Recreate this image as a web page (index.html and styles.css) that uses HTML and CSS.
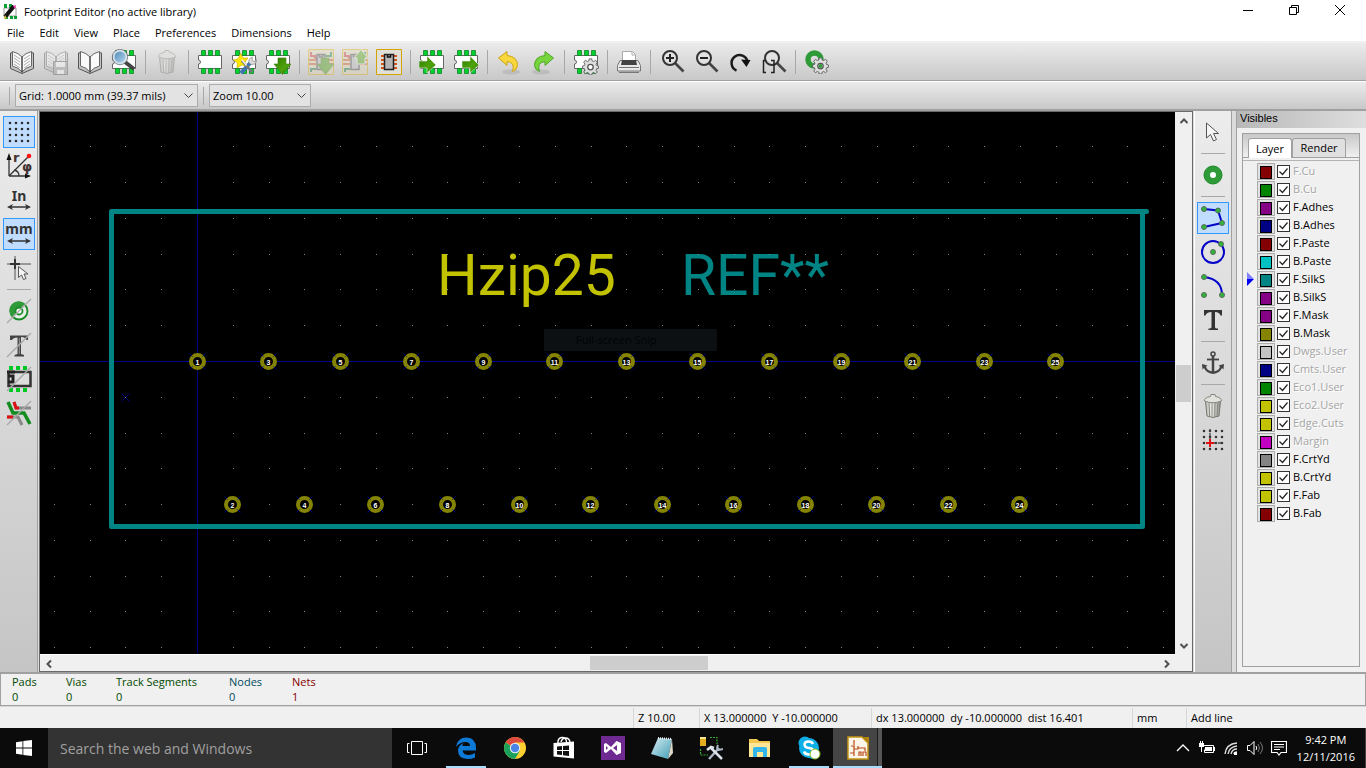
FILE: index.html
```html
<!DOCTYPE html>
<html lang="en">
<head>
<meta charset="utf-8">
<title>Footprint Editor</title>
<link rel="stylesheet" href="styles.css">
</head>
<body>
<svg class="defs" aria-hidden="true">
  <defs>
    <linearGradient id="down" x1="0" y1="0" x2="1" y2="1"><stop offset="0" stop-color="#2f7d00"/><stop offset=".6" stop-color="#4fa30c"/><stop offset="1" stop-color="#2e7400"/></linearGradient>
    <linearGradient id="glass" x1="0" y1="0" x2="1" y2="1"><stop offset="0" stop-color="#4b86b5"/><stop offset="1" stop-color="#b8dcf2"/></linearGradient>
    <linearGradient id="can" x1="0" y1="0" x2="1" y2="0"><stop offset="0" stop-color="#b4b6ae"/><stop offset=".4" stop-color="#f2f2ee"/><stop offset="1" stop-color="#8d8f88"/></linearGradient>
    <linearGradient id="note" x1="0" y1="0" x2="1" y2="1"><stop offset="0" stop-color="#d8eef4"/><stop offset="1" stop-color="#3f9cb4"/></linearGradient>
    <symbol id="chip" viewBox="0 0 26 26">
      <path d="M1.5 6.5h23v13h-23v-4.500a2 2 0 0 0 0-4z" fill="#fff" stroke="#666"/>
      <path d="M4.500 1.500h4v5h-4zM11.500 1.500h4v5h-4zM18.500 1.500h4v5h-4zM4.500 19.500h4v5h-4zM11.500 19.500h4v5h-4zM18.500 19.500h4v5h-4z" fill="#00d22d" stroke="#17802a" stroke-width=".8"/>
    </symbol>
    <symbol id="book" viewBox="0 0 26 26">
      <path d="M1.500 4v15.500l11.500 5 11.500-5V4l-2-.5L13 8 3.500 3.500z" fill="#c4c4c4" stroke="#555" stroke-linejoin="round"/>
      <path d="M3.500 2.500v14.500q6 1.500 9.500 6 3.500-4.500 9.500-6V2.500Q16.500 4 13 8 9.500 4 3.500 2.500z" fill="#fafafa" stroke="#666"/><path d="M13 8v15.500" stroke="#444" stroke-width="1.500"/>
    </symbol>
    <symbol id="booklines" viewBox="0 0 26 26"><path d="M5 6l6 4M5 9l6 4M5 12l6 4M5 15l6 4M21 6l-6 4M21 9l-6 4M21 12l-6 4M21 15l-6 4" stroke="#aaa" fill="none"/></symbol>
    <symbol id="trash" viewBox="0 0 26 26">
      <path d="M5.500 8l1.500 15q6 3 12 0L20.500 8z" fill="url(#can)" stroke="#777a70"/>
      <path d="M9 10l.7 13M12 10v14M15 10l-.3 14M18 10l-1 13" stroke="#85877f"/>
      <path d="M4.500 8q-.5-3.500 6-4.500l.5-2h4l.5 2q6 1 6 4.500-8.500 3.500-17 0z" fill="#e2e3dd" stroke="#85877f"/>
    </symbol>
    <symbol id="gear" viewBox="0 0 20 20">
      <path d="M8.500 1h3l.5 2.500 1.700.7L16 2.700 18 5l-1.500 2.200.7 1.700 2.300.6v2.500l-2.300.7-.7 1.700L18 16.500 16 18.500l-2.300-1.500-1.700.8-.5 2.200h-3L8 17.800l-1.700-.8L4 18.500 2 16.500l1.500-2.100-.7-1.700L.5 12V9.500l2.300-.6.7-1.700L2 5l2-2.300 2.300 1.500L8 3.500z" fill="#dedede" stroke="#555"/>
      <circle cx="10" cy="10.700" r="3.200" fill="#fff" stroke="#555" stroke-width="1.500"/>
    </symbol>
    <symbol id="pcb" viewBox="0 0 26 26">
      <path d="M.5.5h25v25H.5z" fill="#e2dab4" stroke="#e0ac00"/>
      <path d="M3 3v4h5M6 8l3 2" stroke="#c33" stroke-width="2" fill="none"/><path d="M23 3v4h-5M3 23v-3h5" stroke="#1c7a3c" stroke-width="2" fill="none"/>
      <path d="M1 11h7M1 15h7M18 11h7M18 15h7" stroke="#d4551a" stroke-width="2"/>
      <path d="M9 5.500h8v15H9zM11.500 6v2h3V6" fill="#bbb" stroke="#444" stroke-width="1.500"/>
    </symbol>
    <symbol id="darrow" viewBox="0 0 26 26"><path d="M13 9h8v6h5l-8.500 10.500L9 15h4z" fill="url(#down)" stroke="#3b7c08" stroke-width=".6"/></symbol>
    <symbol id="lens" viewBox="0 0 26 26"><path d="M15 14l8.500 8.500" stroke="#444" stroke-width="2.600"/><circle cx="10" cy="9" r="7" fill="#e5e5e5" fill-opacity=".5" stroke="#333" stroke-width="2"/></symbol>
    <symbol id="span" viewBox="0 0 26 26"><path d="M4 20h18" stroke="#333" stroke-width="1.500"/><path d="M1 20l6-3-1.500 3L7 23zM25 20l-6-3 1.500 3-1.500 3z" fill="#333"/></symbol>
    <symbol id="tools" viewBox="0 0 20 20"><path d="M3 18L14 6" stroke="#3e75b0" stroke-width="4"/><path d="M12 8q-2-5 3-7v4l3 1 1-3q2 5-4 6z" fill="#ddd" stroke="#777" stroke-width=".6"/><path d="M4 5l11 12" stroke="#777" stroke-width="2.500"/><path d="M4 4l5 6" stroke="#eee" stroke-width="1.500"/></symbol>
  </defs>
</svg>

<div class="app">
  <header class="titlebar">
    <svg class="app-icon" viewBox="0 0 16 16"><path d="M2 4h12v8H2z" fill="#fff" stroke="#999"/><path d="M2 0h3v4H2zM7 0h3v4H7zM3 12h3v3H3zM8 12h3v3H8zM12 12h3v3h-3z" fill="#0a9f32"/><path d="M3 13L12 2" stroke="#111" stroke-width="4"/><path d="M11 2l3-1-1 4z" fill="#e3a"/><path d="M3 11l2 3-3 1z" fill="#d4b72c"/></svg>
    <h1>Footprint Editor (no active library)</h1>
    <div class="window-buttons">
      <button aria-label="Minimize"><svg viewBox="0 0 12 12"><path d="M1 6.500h10" stroke="#000"/></svg></button>
      <button aria-label="Restore"><svg viewBox="0 0 12 12"><path d="M1.500 3.500h7v7h-7zM3.500 3V1.500h7v7H9" fill="none" stroke="#000"/></svg></button>
      <button aria-label="Close"><svg viewBox="0 0 12 12"><path d="M1 1l10 10M11 1L1 11" stroke="#000"/></svg></button>
    </div>
  </header>
  <nav class="menubar">
    <button>File</button><button>Edit</button><button>View</button><button>Place</button><button>Preferences</button><button>Dimensions</button><button>Help</button>
  </nav>

  <div class="toolbar">
    <button aria-label="Active library"><svg viewBox="0 0 26 26"><use href="#book"/><use href="#booklines"/></svg></button>
    <button aria-label="Save" disabled><svg viewBox="0 0 26 26"><use href="#book"/><use href="#booklines"/><path d="M10.500 12.500h14v13h-14z" fill="#999" stroke="#555"/><path d="M13 13h9v5h-9zM14 21h7v4h-7z" fill="#fff"/></svg></button>
    <button aria-label="New library"><svg viewBox="0 0 26 26"><use href="#book"/></svg></button>
    <button aria-label="Footprint viewer"><svg viewBox="0 0 26 26"><use href="#chip"/><path d="M14 13l9 7" stroke="#444" stroke-width="4"/><circle cx="9" cy="8" r="6.500" fill="url(#glass)" stroke="#d9e2ea" stroke-width="2"/><circle cx="9" cy="8" r="7.700" fill="none" stroke="#68727c" stroke-width=".8"/></svg></button>
    <span class="sep"></span>
    <button aria-label="Delete part" disabled><svg viewBox="0 0 26 26"><use href="#trash"/></svg></button>
    <span class="sep"></span>
    <button aria-label="New footprint"><svg viewBox="0 0 26 26"><use href="#chip"/></svg></button>
    <button aria-label="Footprint wizard"><svg viewBox="0 0 26 26"><use href="#chip"/><path d="M9.500 4l2.500 5h5l-3 4 2 5-5-2-5 3 .5-5-4-3 5-1.500z" fill="#ffe600" stroke="#c9a800" stroke-width=".6"/><use href="#tools" x="7" y="7" width="19" height="19"/></svg></button>
    <button aria-label="Load footprint"><svg viewBox="0 0 26 26"><use href="#chip"/><use href="#darrow"/></svg></button>
    <span class="sep"></span>
    <button aria-label="Load from board" disabled><svg viewBox="0 0 26 26"><use href="#pcb"/><use href="#darrow"/></svg></button>
    <button aria-label="Update in board" disabled><svg viewBox="0 0 26 26"><use href="#pcb"/><path d="M15 15V9h-3l7-8.500L26 9h-3v6z" fill="#4fa30c" stroke="#eee"/></svg></button>
    <button aria-label="Insert into board"><svg viewBox="0 0 26 26"><path d="M.5.500h25v25H.5z" fill="#e0dfd8" stroke="#d6a400"/><path d="M5 7h4M5 11h4M5 15h4M5 19h4M17 7h4M17 11h4M17 15h4M17 19h4" stroke="#d4551a" stroke-width="2"/><path d="M8.500 5.500h9v15h-9z" fill="#b5b5b5" stroke="#222" stroke-width="1.500"/><path d="M11.500 6v2h3V6" fill="none" stroke="#111" stroke-width="1.500"/></svg></button>
    <span class="sep"></span>
    <button aria-label="Import footprint"><svg viewBox="0 0 26 26"><use href="#chip"/><path d="M0 12h8V7l9 9-9 8v-5H0z" fill="url(#down)" stroke="#eee" stroke-width=".6"/></svg></button>
    <button aria-label="Export footprint"><svg viewBox="0 0 26 26"><use href="#chip"/><path d="M9 12h8V7l9 9-9 8v-5H9z" fill="url(#down)" stroke="#eee" stroke-width=".6"/></svg></button>
    <span class="sep"></span>
    <button aria-label="Undo"><svg viewBox="0 0 26 26"><ellipse cx="15" cy="23" rx="9" ry="2.500" fill="#aaa" opacity=".5"/><path d="M2.500 9L11 2.500v4q10.500 1 10.500 10-.5 4.500-5 6 3-9-5.500-10v4z" fill="#f7d73c" stroke="#d0a516"/></svg></button>
    <button aria-label="Redo"><svg viewBox="0 0 26 26"><ellipse cx="11" cy="23" rx="9" ry="2.500" fill="#aaa" opacity=".5"/><path d="M23.500 9L15 2.500v4q-10.500 1-10.500 10 .5 4.500 5 6-3-9 5.500-10v4z" fill="#76d43c" stroke="#4ea627"/></svg></button>
    <span class="sep"></span>
    <button aria-label="Footprint properties"><svg viewBox="0 0 26 26"><use href="#chip"/><use href="#gear" x="9" y="9" width="17" height="17"/></svg></button>
    <span class="sep"></span>
    <button aria-label="Print"><svg viewBox="0 0 26 26"><path d="M6.500 13V2.500h10l3 3V13z" fill="#fff" stroke="#aaa"/><path d="M16 3v3h3" fill="none" stroke="#aaa"/><path d="M4 11.500h18l2.500 5v5.500h-23v-5.500z" fill="#e8e8e8" stroke="#777"/><path d="M6 11h14l1 5H5z" fill="#444"/><path d="M3 18.500h20M3 23.500h20" stroke="#777"/></svg></button>
    <span class="sep"></span>
    <button aria-label="Zoom in"><svg viewBox="0 0 26 26"><use href="#lens" x="1"/><path d="M7 9h8M11 5v8" stroke="#222" stroke-width="2"/></svg></button>
    <button aria-label="Zoom out"><svg viewBox="0 0 26 26"><use href="#lens" x="1"/><path d="M7 9h8" stroke="#222" stroke-width="2"/></svg></button>
    <button aria-label="Redraw view"><svg viewBox="0 0 26 26"><path d="M9.500 21.500a8 8 0 1 1 11-8.500" fill="none" stroke="#1a1a1a" stroke-width="2.500"/><path d="M14 10.500l9.500.5-4 7z" fill="#111"/></svg></button>
    <button aria-label="Zoom to fit"><svg viewBox="0 0 26 26"><use href="#lens" x="1"/><path d="M5 11.500H2.500v12H5M10 11.500h3v12h-3" fill="none" stroke="#222" stroke-width="1.500"/></svg></button>
    <span class="sep"></span>
    <button aria-label="Pad settings"><svg viewBox="0 0 26 26"><circle cx="10.500" cy="10.500" r="6.500" fill="none" stroke="#2f9a38" stroke-width="5.500"/><use href="#gear" x="8" y="8" width="17" height="17"/><circle cx="16.500" cy="17" r="2" fill="#2f9a38"/></svg></button>
  </div>

  <div class="toolbar options">
    <span class="grip"></span>
    <select class="grid-select" aria-label="Grid"><option>Grid: 1.0000 mm (39.37 mils)</option></select>
    <span class="grip"></span>
    <select class="zoom-select" aria-label="Zoom"><option>Zoom 10.00</option></select>
  </div>

  <main class="workspace">
    <div class="tools">
      <button class="on" aria-label="Show grid"><svg viewBox="0 0 26 26"><path d="M4 4h19M4 10h19M4 16h19M4 22h19" stroke="#2b2b2b" stroke-width="2.600" stroke-linecap="round" stroke-dasharray="0 6"/></svg></button>
      <button aria-label="Polar coordinates"><svg viewBox="0 0 26 26"><path d="M3 23V4M3 23h19M3 23L23 3M8 17q5 1 5 6" fill="none" stroke="#333" stroke-width="1.300"/><path d="M3 0l2.500 7H.5zM25 23l-6-2.500v5z" fill="#111"/><circle cx="23" cy="3" r="2.300" fill="#f11"/><text x="7" y="9" class="icon-text">r</text><text x="16" y="18" class="icon-text">φ</text></svg></button>
      <button aria-label="Units in inches"><svg viewBox="0 0 26 26"><text x="13" y="14" text-anchor="middle" class="unit-text">In</text><use href="#span"/></svg></button>
      <button class="on" aria-label="Units in millimeters"><svg viewBox="0 0 26 26"><text x="13" y="13" text-anchor="middle" class="unit-text">mm</text><use href="#span"/></svg></button>
      <button aria-label="Cursor shape"><svg viewBox="0 0 26 26"><path d="M1 9h24M9 1v24" stroke="#999" stroke-width="2"/><path d="M4 9h10M9 4v10" stroke="#333" stroke-width="2"/><path d="M12.500 11.500v11l3-2.500 2 4.500 2.500-1-2-4.500h4z" fill="#f4f4f4" stroke="#555"/></svg></button>
      <span class="sep"></span>
      <button aria-label="Show pads sketch"><svg viewBox="0 0 26 26"><circle cx="13" cy="13" r="8.500" fill="#e8efe8" stroke="#178a25" stroke-width="1.800"/><path d="M6 19A9 9 0 0 1 19 6z" fill="#2f9a38"/><circle cx="13" cy="13" r="3.500" fill="#fff" stroke="#178a25" stroke-width="1.800"/><path d="M1 25L25 1" stroke="#aaa" stroke-width="1.300"/></svg></button>
      <button aria-label="Show texts sketch"><svg viewBox="0 0 26 26"><path d="M4 3.500h18V8h-1.500q-1-3-5.500-3v17l3 1v1.500H8.500V23l3-1V5.500Q7 5.500 6 8H4z" fill="#444"/><path d="M13.300 6v16" stroke="#999"/><path d="M1 25L25 1" stroke="#aaa" stroke-width="1.500"/></svg></button>
      <button aria-label="Show outlines sketch"><svg viewBox="0 0 26 26"><path d="M2.500 6v14h22V6z" fill="#ddd" stroke="#333" stroke-width="2.500"/><path d="M1 6h8M2 10h5v6H2" fill="none" stroke="#222" stroke-width="3"/><path d="M3 0h4v4H3zM10 0h4v4h-4zM17 0h4v4h-4zM3 22h4v4H3zM10 22h4v4h-4zM17 22h4v4h-4z" fill="#00c822"/><path d="M1 25L25 1" stroke="#aaa" stroke-width="1.500"/></svg></button>
      <button aria-label="High contrast mode"><svg viewBox="0 0 26 26"><path d="M8 2l2 6h15M1 17h11l4 8" fill="none" stroke="#888" stroke-width="3"/><path d="M8 2l2 6h3M1 17h6" fill="none" stroke="#d11" stroke-width="3"/><path d="M2 2l5 11h11l6 11" fill="none" stroke="#128c1e" stroke-width="3.500"/><path d="M1 25L25 1" stroke="#aaa" stroke-width="1.500"/></svg></button>
    </div>

    <section class="canvas-frame">
      <svg class="canvas" role="img" aria-label="Footprint Hzip25">
        <g transform="translate(157.5 249.5)">
          <path d="M-400 0H3000M0-400V3000" class="axis"/>
          <path d="M-86-150H949M945-150V165H-86V-150" class="silk"/>
          <path d="M-76 32l8 8M-68 32l-8 8" class="axis"/>
          <g id="pads"></g>
        </g>
        <text x="397" y="183" class="value">Hzip25</text>
        <text x="641" y="183" class="reference">REF**</text>
        <g transform="translate(157 249)"><path id="dots" class="dots"/></g>
        <rect x="504" y="217" width="173" height="22" class="ghost"/>
        <text x="536" y="232" class="ghost-text">Full-screen Snip</text>
      </svg>
      <div class="vscroll">
        <button aria-label="Scroll up"><svg viewBox="0 0 10 10"><path d="M1.500 7L5 3.500 8.500 7"/></svg></button>
        <div class="track"><i></i></div>
        <button aria-label="Scroll down"><svg viewBox="0 0 10 10"><path d="M1.500 3L5 6.500 8.500 3"/></svg></button>
      </div>
      <div class="hscroll">
        <button aria-label="Scroll left"><svg viewBox="0 0 10 10"><path d="M7 1.500L3.500 5 7 8.500"/></svg></button>
        <div class="track"><i></i></div>
        <button aria-label="Scroll right"><svg viewBox="0 0 10 10"><path d="M3 1.500L6.500 5 3 8.500"/></svg></button>
      </div>
    </section>

    <div class="tools right">
      <button aria-label="Select"><svg viewBox="0 0 26 26"><path d="M6.500 4v15l4-3.500 3 6.500 3-1.500-3-6h5z" fill="#f6f6f6" stroke="#555"/></svg></button>
      <span class="sep"></span>
      <button aria-label="Add pads"><svg viewBox="0 0 26 26"><circle cx="13" cy="13" r="6" fill="#fff" stroke="#2f9a38" stroke-width="6"/><circle cx="13" cy="13" r="9" fill="none" stroke="#178a25"/></svg></button>
      <span class="sep"></span>
      <button class="on" aria-label="Add line"><svg viewBox="0 0 26 26"><path d="M4 4l14 1.500L22 18 4 22" fill="none" stroke="#0404c8" stroke-width="2"/><g class="nodes"><circle cx="4" cy="4" r="2.500"/><circle cx="18" cy="5.500" r="2.500"/><circle cx="22" cy="18" r="2.500"/><circle cx="4" cy="22" r="2.500"/></g></svg></button>
      <button aria-label="Add circle"><svg viewBox="0 0 26 26"><circle cx="13" cy="13" r="11" fill="none" stroke="#0404c8" stroke-width="2"/><g class="nodes"><circle cx="13" cy="13" r="2.500"/><circle cx="21" cy="5" r="2.500"/></g></svg></button>
      <button aria-label="Add arc"><svg viewBox="0 0 26 26"><path d="M4 4q18 2 18 18" fill="none" stroke="#0404c8" stroke-width="2"/><g class="nodes"><circle cx="4" cy="4" r="2.500"/><circle cx="22" cy="22" r="2.500"/><circle cx="4" cy="22" r="2.500"/></g></svg></button>
      <button aria-label="Add text"><svg viewBox="0 0 26 26"><path d="M4 3h18v5.500h-1.500q-1-3.500-5.500-3.500V20q0 1.500 3 1.500V23h-9.500v-1.500q3 0 3-1.500V5q-5 0-6 3.500H4z" fill="#333"/></svg></button>
      <span class="sep"></span>
      <button aria-label="Set anchor"><svg viewBox="0 0 26 26"><circle cx="13" cy="4" r="2" fill="none" stroke="#444" stroke-width="1.500"/><path d="M13 6v17" stroke="#444" stroke-width="2.500"/><path d="M7 9.500h12" stroke="#444" stroke-width="1.800"/><path d="M2 14l5.500 1.500-1.500 1q1 4.500 7 5 6-.5 7-5l-1.500-1L24 14l-.5 5.500-1.500-1.500q-2 5-9 6-7-1-9-6l-1.500 1.500z" fill="#444"/></svg></button>
      <span class="sep"></span>
      <button aria-label="Delete items"><svg viewBox="0 0 26 26"><use href="#trash"/></svg></button>
      <button aria-label="Grid origin"><svg viewBox="0 0 26 26"><path d="M4 4h19M4 10h19M4 16h19M4 22h19" stroke="#333" stroke-width="2.600" stroke-linecap="round" stroke-dasharray="0 6"/><path d="M10 2v10M10 16h13" stroke="#444" stroke-width="1.300" stroke-dasharray="3 1"/><path d="M6 16h8M10 12v8" stroke="#e01010" stroke-width="2"/></svg></button>
    </div>

    <aside class="visibles">
      <h2>Visibles</h2>
      <div class="book">
        <div class="tabs"><button class="active">Layer</button><button>Render</button></div>
        <ul class="layers">
          <li class="off"><button class="c-red" aria-label="F.Cu color"></button><label><input type="checkbox" checked>F.Cu</label></li>
          <li class="off"><button class="c-green" aria-label="B.Cu color"></button><label><input type="checkbox" checked>B.Cu</label></li>
          <li><button class="c-purple" aria-label="F.Adhes color"></button><label><input type="checkbox" checked>F.Adhes</label></li>
          <li><button class="c-navy" aria-label="B.Adhes color"></button><label><input type="checkbox" checked>B.Adhes</label></li>
          <li><button class="c-red" aria-label="F.Paste color"></button><label><input type="checkbox" checked>F.Paste</label></li>
          <li><button class="c-cyan" aria-label="B.Paste color"></button><label><input type="checkbox" checked>B.Paste</label></li>
          <li class="current"><button class="c-teal" aria-label="F.SilkS color"></button><label><input type="checkbox" checked>F.SilkS</label></li>
          <li><button class="c-purple" aria-label="B.SilkS color"></button><label><input type="checkbox" checked>B.SilkS</label></li>
          <li><button class="c-purple" aria-label="F.Mask color"></button><label><input type="checkbox" checked>F.Mask</label></li>
          <li><button class="c-olive" aria-label="B.Mask color"></button><label><input type="checkbox" checked>B.Mask</label></li>
          <li class="off"><button class="c-silver" aria-label="Dwgs.User color"></button><label><input type="checkbox" checked>Dwgs.User</label></li>
          <li class="off"><button class="c-navy" aria-label="Cmts.User color"></button><label><input type="checkbox" checked>Cmts.User</label></li>
          <li class="off"><button class="c-green" aria-label="Eco1.User color"></button><label><input type="checkbox" checked>Eco1.User</label></li>
          <li class="off"><button class="c-yellow" aria-label="Eco2.User color"></button><label><input type="checkbox" checked>Eco2.User</label></li>
          <li class="off"><button class="c-yellow" aria-label="Edge.Cuts color"></button><label><input type="checkbox" checked>Edge.Cuts</label></li>
          <li class="off"><button class="c-magenta" aria-label="Margin color"></button><label><input type="checkbox" checked>Margin</label></li>
          <li><button class="c-gray" aria-label="F.CrtYd color"></button><label><input type="checkbox" checked>F.CrtYd</label></li>
          <li><button class="c-yellow" aria-label="B.CrtYd color"></button><label><input type="checkbox" checked>B.CrtYd</label></li>
          <li><button class="c-yellow" aria-label="F.Fab color"></button><label><input type="checkbox" checked>F.Fab</label></li>
          <li><button class="c-red" aria-label="B.Fab color"></button><label><input type="checkbox" checked>B.Fab</label></li>
        </ul>
      </div>
    </aside>
  </main>

  <dl class="counts">
    <div class="copper"><dt>Pads</dt><dd>0</dd></div>
    <div class="copper"><dt>Vias</dt><dd>0</dd></div>
    <div class="copper"><dt>Track Segments</dt><dd>0</dd></div>
    <div class="nodes-count"><dt>Nodes</dt><dd>0</dd></div>
    <div class="nets"><dt>Nets</dt><dd>1</dd></div>
  </dl>
  <footer class="status">
    <span class="s-msg"></span><span class="s-zoom">Z 10.00</span><span class="s-pos">X 13.000000&nbsp; Y -10.000000</span><span class="s-delta">dx 13.000000&nbsp; dy -10.000000&nbsp; dist 16.401</span><span class="s-unit">mm</span><span class="s-tool">Add line</span>
  </footer>
</div>

<div class="taskbar">
  <button class="start" aria-label="Start"><svg viewBox="0 0 16 16"><path d="M0 2.200L6.500 1.200v6.300H0zM7.300 1.100L16 0v7.500H7.300zM0 8.400h6.500v6.400L0 13.800zM7.300 8.400H16V16l-8.700-1.100z" fill="#fff"/></svg></button>
  <input class="search" type="text" placeholder="Search the web and Windows" aria-label="Search the web and Windows">
  <button class="task" aria-label="Task view"><svg viewBox="0 0 24 24"><path d="M6.500 5.500h11v13h-11zM4.500 7.500h-2v9h2M19.500 7.500h2v9h-2" fill="none" stroke="#fff"/></svg></button>
  <button class="task open" aria-label="Edge"><svg viewBox="0 0 24 24"><path d="M2 11Q3.500 1.500 12.500 1.500 22 2 22 12v2.500H8.500q1 4.500 6 4.500 3.500 0 6.500-2v4.500Q18 23 13.500 23 4 22.500 4 14.500 4 9.500 9.500 7 8 9 8.500 10h7.500q0-4-4.500-4Q6 6 2 11z" fill="#0e7ad8"/></svg></button>
  <button class="task" aria-label="Chrome"><svg viewBox="0 0 24 24"><circle cx="12" cy="12" r="11" fill="#fcd030"/><path d="M12 12L2.500 6.500A11 11 0 0 1 21.500 6.500H12z" fill="#dd4b3e"/><path d="M2.500 6.500A11 11 0 0 0 12 23l5-8.500-5-2z" fill="#1aa05a"/><circle cx="12" cy="12" r="5.200" fill="#f2f2f2"/><circle cx="12" cy="12" r="4.200" fill="#4a86e8"/></svg></button>
  <button class="task" aria-label="Store"><svg viewBox="0 0 24 24"><path d="M1.500 7L22 5.500v17L1.500 20.500z" fill="#fff"/><path d="M6 8V5q1-4 5-3.500 3.500.5 3.500 5M9 6q1-4 5-4 4 .5 4 5" fill="none" stroke="#fff" stroke-width="1.400"/><path d="M5 10.500l5-.5v4H5zM11 10l6-.5V14h-6zM5 15h5v4l-5-.5zM11 15h6v5l-6-.7z" fill="#111"/></svg></button>
  <button class="task" aria-label="Visual Studio"><svg viewBox="0 0 24 24"><path d="M0 0h24v24H0z" fill="#6f2a91"/><path d="M3 8l2-1 5 4 5.500-6L20 7v10l-4.500 2-5.500-6-5 4-2-1zM5 10v4l2-2zM16 9l-4 3 4 3z" fill="#fff" fill-rule="evenodd"/></svg></button>
  <button class="task" aria-label="Notepad"><svg viewBox="0 0 24 24"><path d="M8 2l14 1-4 20L1 18z" fill="url(#note)"/><path d="M22 3l1 14-5 6z" fill="#ddd8c6"/><path d="M8 2l14 1" stroke="#eee" stroke-width="2" stroke-dasharray="1 1"/></svg></button>
  <button class="task" aria-label="Device tools"><svg viewBox="0 0 24 24"><path d="M1 1h6v9H1z" fill="#e3ac1f"/><path d="M1 2h6" stroke="#ffe58b" stroke-width="2"/><path d="M11 1.500h7V8M1.500 13v6H9" fill="none" stroke="#37a637" stroke-width="1.200" stroke-dasharray="2 1"/><path d="M10 23l10-11" stroke="#abb7c5" stroke-width="2.500"/><path d="M19 9q-2 4 1 5l4-1" fill="none" stroke="#abb7c5" stroke-width="2"/><path d="M8 14l4-3 3 1M12 12l11 11" fill="none" stroke="#dbe1e8" stroke-width="2.500"/></svg></button>
  <button class="task" aria-label="File Explorer"><svg viewBox="0 0 24 24"><path d="M1 3h8l2 2h11v16H1z" fill="#f3c64f"/><path d="M1 7h21v14H1z" fill="#ffe797"/><path d="M5 21v-8q0-2 2-2h10q2 0 2 2v8h-4v-5H9v5z" fill="#32b5e8"/></svg></button>
  <button class="task open" aria-label="Skype"><svg viewBox="0 0 24 24"><circle cx="8" cy="7" r="6.500" fill="#0eaee8"/><circle cx="12" cy="12" r="10" fill="#0eaee8"/><circle cx="16" cy="17" r="6" fill="#0eaee8"/><path d="M16 8q-1-2.500-4.500-2.500-4 0-4 3T12 12t4.500 3.500-4.500 3q-4 0-5-3" fill="none" stroke="#fff" stroke-width="2.500"/><circle cx="18" cy="18" r="5" fill="#fff" stroke="#89b916"/></svg></button>
  <button class="task open focus" aria-label="KiCad"><svg viewBox="0 0 24 24"><path d="M2 1h14l6 6v16H2z" fill="#fbf6e8" stroke="#c49412" stroke-width="1.500"/><path d="M17 1h6v6z" fill="#b28508"/><path d="M8 4v5M5 10h4M8 10v10M4 17h4M8 13h4v-3M12 12h7v3M13 20v-4h2v4M17 20v-4h3v4" fill="none" stroke="#bd4a1b" stroke-width="1.200"/></svg></button>
  <div class="tray">
    <button aria-label="Show hidden icons"><svg viewBox="0 0 16 16"><path d="M2 11l6-6 6 6" fill="none" stroke="#fff" stroke-width="1.300"/></svg></button>
    <button aria-label="Battery"><svg viewBox="0 0 16 16"><path d="M3.500 5.500h11v7h-9v-3" fill="none" stroke="#fff"/><path d="M6 7h7v4H6zM15 7h1v4h-1zM0 3h5v4H0zM1 1h1v2H1zM3 1h1v2H3zM2 7h1v5H2z" fill="#fff"/></svg></button>
    <button aria-label="Wi-Fi"><svg viewBox="0 0 16 16"><path d="M2 14Q3 4 14 3M5 14Q6 7 14 6M8 14q1-5 6-5M11 14q0-2 3-2" fill="none" stroke="#ddd" stroke-width="1.400"/><path d="M11 12h3v3h-3z" fill="#fff"/></svg></button>
    <button aria-label="Volume"><svg viewBox="0 0 16 16"><path d="M.5 5.500H3l4-4v13l-4-4H.5zM9 6q1.500 2 0 4" fill="none" stroke="#fff"/><path d="M11 4q3 4 0 8M13 2q5 6 0 12" fill="none" stroke="#777"/></svg></button>
    <button aria-label="Notifications"><svg viewBox="0 0 16 16"><path d="M.5 1.500h15v11H10L8 15l-2-2.500H.5zM3 4.500h10M3 7h10M3 9.500h6" fill="none" stroke="#fff" stroke-width="1.200"/></svg></button>
    <time>9:42 PM<br>12/11/2016</time>
  </div>
</div>
<script src="app.js"></script>
</body>
</html>
```
FILE: styles.css
```css
* { box-sizing: border-box; }
body {
  margin: 0;
  height: 100vh;
  display: flex;
  flex-direction: column;
  background: #f0f0f0;
  color: #000;
  font: 11px/16px "Open Sans", "Noto Sans", sans-serif;
  overflow: hidden;
}
button { border: 0; padding: 0; background: none; font: inherit; color: inherit; }
h1, h2, ul, dl, dd { margin: 0; padding: 0; font: inherit; list-style: none; }
.defs { position: absolute; width: 0; height: 0; }
.app { flex: 1; min-height: 0; display: flex; flex-direction: column; }

.titlebar { display: flex; align-items: center; height: 23px; padding: 0 3px 0 2px; gap: 6px; background: #fff; }
.titlebar h1 { flex: 1; }
.app-icon { width: 16px; height: 16px; }
.window-buttons { display: flex; align-self: flex-start; }
.window-buttons button { width: 46px; height: 20px; display: grid; place-items: center; }
.window-buttons svg { width: 12px; height: 12px; }
.menubar { display: flex; gap: 15px; height: 20px; padding: 2px 7px 0; background: #fff; border-bottom: 2px solid #f0f0f0; }

.toolbar {
  display: flex;
  align-items: center;
  height: 38px;
  padding-left: 5px;
  background: linear-gradient(#ebebeb, #c8c8c8);
  border-bottom: 1px solid #a0a0a0;
}
.toolbar button { width: 34px; height: 34px; display: grid; place-items: center; }
.toolbar svg { width: 26px; height: 26px; }
button:disabled svg { opacity: .4; }
.toolbar .sep { width: 1px; height: 24px; margin: 0 4px; background: #a8a8a8; }
.toolbar.options { height: 30px; border-top: 1px solid #fff; border-bottom: 2px solid #a0a0a0; }
.grip { width: 1px; height: 18px; margin: 0 5px 0 4px; background: #a8a8a8; }
select {
  appearance: none;
  height: 23px;
  border: 1px solid #acacac;
  border-radius: 0;
  padding: 0 3px;
  font: inherit;
  color: #000;
  background: #e3e3e3 url("data:image/svg+xml,%3Csvg xmlns='http://www.w3.org/2000/svg' width='9' height='6'%3E%3Cpath d='M.5.5l4 4 4-4' fill='none' stroke='%23444'/%3E%3C/svg%3E") no-repeat right 4px center;
}
.grid-select { width: 183px; margin-right: 1px; }
.zoom-select { width: 102px; }

.workspace { flex: 1; min-height: 0; display: flex; background: #dcdcdc; }
.tools {
  width: 38px;
  padding: 4px 1px 0 2px;
  display: flex;
  flex-direction: column;
  align-items: center;
  background: linear-gradient(#ececec, #c5c5c5);
  border-right: 1px solid #a0a0a0;
}
.tools button { width: 32px; height: 32px; margin: 1px 0; display: grid; place-items: center; border: 1px solid transparent; }
.tools button.on { background: #c0dcff; border-color: #3399ff; }
.tools svg { width: 26px; height: 26px; overflow: visible; }
.tools .sep { width: 24px; height: 1px; margin: 4px 0; background: #a8a8a8; }
.tools.right { margin-left: 1px; padding: 4px 2px 0 1px; border-left: 1px solid #fff; }
.icon-text { font: bold 13px "DejaVu Sans", sans-serif; fill: #433; }
.unit-text { font: bold 14px "Noto Sans", sans-serif; fill: #333; }
.nodes circle { fill: #2fb53c; stroke: #5c6b5e; }

.canvas-frame {
  flex: 1;
  min-width: 0;
  margin-left: 1px;
  display: grid;
  grid-template: minmax(0, 1fr) 17px / minmax(0, 1fr) 17px;
  background: #f0f0f0;
  border: 1px solid #696969;
}
.canvas { width: 100%; height: 100%; background: #000; overflow: hidden; }
.axis { stroke: #000084; fill: none; }
.silk { stroke: #008484; stroke-width: 5; stroke-linecap: round; stroke-linejoin: round; fill: none; }
.value, .reference { font: 57px Roboto, sans-serif; }
.value { fill: #c2c200; }
.reference { fill: #008484; }
.pad circle { fill: #000; stroke: #848400; stroke-width: 4; }
.pad text { font: bold 7px "Liberation Sans", sans-serif; fill: #fff; text-anchor: middle; }
.dots { fill: #848484; }
.ghost { fill: #0c1013; }
.ghost-text { font-size: 11px; fill: #020304; }
.vscroll, .hscroll { display: flex; }
.vscroll { flex-direction: column; }
.hscroll button, .vscroll button { width: 17px; height: 17px; display: grid; place-items: center; }
.hscroll svg, .vscroll svg { width: 10px; height: 10px; fill: none; stroke: #505050; stroke-width: 2; }
.hscroll .track, .vscroll .track { flex: 1; display: flex; padding: 1px; }
.hscroll { border-top: 1px solid #fff; }
.track i { background: #cdcdcd; }
.hscroll .track { padding-left: 47%; }
.hscroll .track i { width: 118px; }
.vscroll .track { flex-direction: column; justify-content: center; }
.vscroll .track i { height: 37px; }

.visibles { width: 130px; margin-left: 4px; display: flex; flex-direction: column; background: #f0f0f0; border-left: 1px solid #a0a0a0; }
.visibles h2 { height: 17px; padding-left: 3px; background: linear-gradient(90deg, #b8b8b8, #dedede); font: 11px/14px "Liberation Sans", sans-serif; }
.book { flex: 1; margin: 5px 6px 5px 5px; border: 1px solid #a0a0a0; }
.tabs { height: 24px; display: flex; align-items: flex-end; padding: 0 5px; background: linear-gradient(#c8c8c8, #f0f0f0); border-bottom: 1px solid #a0a0a0; box-shadow: 0 2px 0 #f0f0f0, 0 3px 0 #b4b4b4; }
.tabs button { height: 19px; width: 54px; border: 1px solid #a0a0a0; border-bottom: 0; border-radius: 3px 3px 0 0; background: #e0e0e0; }
.tabs button.active { width: 44px; height: 20px; margin-bottom: -1px; background: #fff; }
.layers { padding: 4px 0 0 14px; }
.layers li { height: 18px; display: flex; align-items: center; gap: 2px; position: relative; }
.layers button { width: 18px; height: 17px; border: 1px solid #acacac; padding: 2px; background: #e1e1e1; display: flex; }
.layers button::before { content: ""; width: 12px; height: 11px; border: 1px solid #000; background: currentColor; }
.layers label { display: flex; align-items: center; gap: 3px; line-height: 18px; }
.layers input {
  appearance: none;
  width: 13px;
  height: 13px;
  margin: 0;
  border: 1px solid #333;
  background: #fff;
}
.layers input:checked {
  background: #fff url("data:image/svg+xml,%3Csvg xmlns='http://www.w3.org/2000/svg' width='11' height='11'%3E%3Cpath d='M1.500 5.500l3 3 5-6' fill='none' stroke='%23222' stroke-width='1.200'/%3E%3C/svg%3E") center;
}
.layers .off label { color: #a5a5a5; text-shadow: 1px 1px #fff; }
.layers .current::before {
  content: "";
  position: absolute;
  left: -10px;
  top: 2px;
  width: 7px;
  height: 14px;
  background: linear-gradient(#8080ff 50%, #0000f0 50%);
  clip-path: polygon(0 0, 100% 50%, 0 100%);
}
.layers .c-red { color: #840000; }
.layers .c-green { color: #008400; }
.layers .c-purple { color: #840084; }
.layers .c-navy { color: #000084; }
.layers .c-cyan { color: #00c2c2; }
.layers .c-teal { color: #008484; }
.layers .c-olive { color: #848400; }
.layers .c-silver { color: #c2c2c2; }
.layers .c-yellow { color: #c2c200; }
.layers .c-magenta { color: #c200c2; }
.layers .c-gray { color: #848484; }
.layers button::before { border-color: #000; }

.counts { height: 34px; display: flex; padding: 0 11px; line-height: 15px; border: 1px solid #a0a0a0; border-top-width: 2px; }
.counts > div { min-width: 50px; margin-right: 4px; }
.counts > div:nth-child(2) { min-width: 46px; }
.counts > div:nth-child(3) { min-width: 109px; }
.counts > div:nth-child(4) { min-width: 59px; }
.copper { color: #004800; }
.nodes-count { color: #004b60; }
.nets { color: #840000; }
.status { height: 22px; display: flex; padding-top: 1px; line-height: 20px; border-top: 1px solid #d7d7d7; }
.status span + span { padding-left: 4px; border-left: 1px solid #d7d7d7; white-space: nowrap; }
.s-msg { flex: 1; }
.s-zoom { width: 66px; }
.s-pos { width: 172px; }
.s-delta { width: 261px; }
.s-unit { width: 54px; }
.s-tool { width: 180px; }

.taskbar { height: 40px; display: flex; background: #0b0b0b; color: #fff; }
.start { width: 48px; display: grid; place-items: center; }
.start svg { width: 16px; height: 16px; }
.search { width: 344px; border: 0; padding: 0 12px; background: #333; color: #fff; font: 14px "Open Sans", sans-serif; }
.search::placeholder { color: #a0a0a0; opacity: 1; }
.task { width: 49px; display: grid; place-items: center; position: relative; }
.task svg { width: 24px; height: 24px; }
.task.open::after { content: ""; position: absolute; left: 5px; right: 4px; bottom: 0; height: 2px; background: #a9dcfb; }
.task.focus { background: linear-gradient(90deg, #454545 44px, #1c1c1c 44px, #1c1c1c 45px, #555 45px); }
.task.focus::after { left: 0; right: 0; }
.tray { flex: 1; display: flex; justify-content: flex-end; align-items: center; padding-right: 10px; border-right: 1px solid #444; }
.tray button { width: 24px; height: 24px; display: grid; place-items: center; }
.tray svg { width: 16px; height: 16px; }
.tray time { margin-left: 6px; text-align: center; line-height: 17px; }
```
FILE: app.js
```js
// Grid pitch in pixels at zoom 10 (1 mm).
const PITCH = 35.78;
const ROW = 4 * PITCH;

// Grid points, except those that fall on the axes.
let dots = "";
for (let i = -4; i < 80; i++) {
  for (let j = -6; j < 60; j++) {
    if (i && j) dots += `M${Math.round(i * PITCH)} ${Math.round(j * PITCH)}h1v1h-1z`;
  }
}
document.getElementById("dots").setAttribute("d", dots);

// Odd pads lie on the origin row, even pads four grid steps below.
let pads = "";
for (let n = 1; n <= 25; n++) {
  const x = Math.floor((n - 1) * PITCH);
  const y = n % 2 ? 0 : Math.round(ROW);
  pads += `<g class="pad" transform="translate(${x} ${y})">
    <circle r="6.500"/><path class="axis" d="M-8-8l3 3M8-8l-3 3M-8 8l3-3M8 8l-3-3"/>
    <text y="3">${n}</text></g>`;
}
document.getElementById("pads").innerHTML = pads;
```
